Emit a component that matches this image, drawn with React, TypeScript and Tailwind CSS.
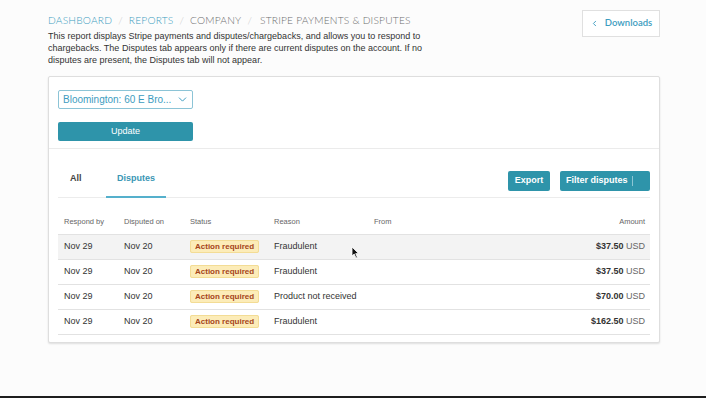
import { ChevronDown, ChevronLeft } from "lucide-react";

const rows = [
  { respond: "Nov 29", disputed: "Nov 20", reason: "Fraudulent", amount: "$37.50" },
  { respond: "Nov 29", disputed: "Nov 20", reason: "Fraudulent", amount: "$37.50" },
  { respond: "Nov 29", disputed: "Nov 20", reason: "Product not received", amount: "$70.00" },
  { respond: "Nov 29", disputed: "Nov 20", reason: "Fraudulent", amount: "$162.50" },
];

function Cursor() {
  return (
    <svg
      className="pointer-events-none absolute left-[351px] top-[246px]"
      width="9"
      height="13"
      viewBox="0 0 9 13"
    >
      <path d="M1 1 L1 10 L3.2 8 L5 12 L6.4 11.4 L4.7 7.6 L7.6 7.6 Z" fill="#111" stroke="#fff" strokeWidth="0.8" />
    </svg>
  );
}

export default function App() {
  return (
    <div className="relative h-[398px] w-[706px] overflow-hidden border-b-2 border-[#1e1e1e] bg-[#fcfcfc] font-['Liberation_Sans',Arial,sans-serif]">
      <div className="flex items-start justify-between pl-[48px] pr-[46px] pt-[10px]">
        <div>
          <div className="flex gap-[6px] pt-[3px] font-['Lato',sans-serif] text-[10.2px] font-light leading-[14px] tracking-[0.2px] text-[#6e6e6e]">
            <span className="text-[#3d9cc0]">DASHBOARD</span>
            <span className="text-[#c4c4c4]">/</span>
            <span className="text-[#3d9cc0]">REPORTS</span>
            <span className="text-[#c4c4c4]">/</span>
            <span>COMPANY</span>
            <span className="text-[#c4c4c4]">/</span>
            <span className="pl-[2px]">STRIPE PAYMENTS &amp; DISPUTES</span>
          </div>
          <p className="mt-[3px] w-[404px] text-[9px] leading-[12px] text-[#333]">
            This report displays Stripe payments and disputes/chargebacks, and allows you to respond to
            chargebacks. The Disputes tab appears only if there are current disputes on the account. If no
            disputes are present, the Disputes tab will not appear.
          </p>
        </div>
        <button className="flex h-[27px] w-[78px] items-center justify-center gap-[6px] border border-[#e0e0e0] bg-white font-['Lato',sans-serif] text-[9.5px] font-semibold text-[#3d9cc0]">
          <ChevronLeft className="h-[9px] w-[9px]" strokeWidth={2.5} />
          Downloads
        </button>
      </div>

      <div className="ml-[48px] mt-[10px] h-[267px] w-[612px] rounded-[2px] border border-[#dedede] bg-white shadow-[0_1px_2px_rgba(0,0,0,0.12)]">
        <div className="px-[9px] pt-[13px]">
          <div className="flex h-[19px] w-[135px] items-center justify-between rounded-[2px] border border-[#8cc4d6] pl-[4px] pr-[3px] text-[10px] text-[#3d9cc0]">
            <span>Bloomington: 60 E Bro...</span>
            <ChevronDown className="h-[13px] w-[13px]" strokeWidth={1.8} />
          </div>
          <button className="mt-[13px] h-[19px] w-[135px] rounded-[2px] bg-[#2e94aa] text-[9px] text-white">
            Update
          </button>
        </div>
        <div className="mt-[7px] border-t border-[#ebebeb] px-[9px]">
          <div className="flex items-end justify-between border-b border-[#ececec]">
            <div className="flex text-[9px] font-bold">
              <div className="w-[48px] pb-[11px] pl-[12px] pt-[23px] text-[#444]">All</div>
              <div className="-mb-px w-[60px] border-b-2 border-[#55b0cc] pb-[9px] pt-[23px] text-center text-[#3a96b4]">
                Disputes
              </div>
            </div>
            <div className="flex gap-[10px] pb-[6px] text-[9px] font-bold text-white">
              <button className="h-[20px] w-[42px] rounded-[2px] bg-[#2e94aa]">Export</button>
              <button className="flex h-[20px] w-[90px] items-center rounded-[2px] bg-[#2e94aa] pl-[6px]">
                Filter disputes
                <span className="ml-[4px] h-[10px] w-px bg-[#8cc6d4]" />
              </button>
            </div>
          </div>

          <table className="mt-[18px] w-full border-collapse text-left">
            <thead>
              <tr className="text-[7.5px] text-[#666]">
                <th className="w-[66px] pb-[7px] pl-[6px] font-normal">Respond by</th>
                <th className="w-[66px] pb-[7px] font-normal">Disputed on</th>
                <th className="w-[84px] pb-[7px] font-normal">Status</th>
                <th className="w-[100px] pb-[7px] font-normal">Reason</th>
                <th className="pb-[7px] font-normal">From</th>
                <th className="pb-[7px] pr-[5px] text-right font-normal">Amount</th>
              </tr>
            </thead>
            <tbody>
              {rows.map((r, i) => (
                <tr
                  key={i}
                  className={`h-[25px] border-y border-[#e2e2e2] text-[9px] text-[#333] ${i === 0 ? "bg-[#f3f3f3]" : ""}`}
                >
                  <td className="pl-[6px]">{r.respond}</td>
                  <td>{r.disputed}</td>
                  <td>
                    <span className="rounded-[2px] border border-[#f3dc95] bg-[#fcecb8] px-[4px] py-[1px] text-[8px] font-bold text-[#a5441a]">
                      Action required
                    </span>
                  </td>
                  <td>{r.reason}</td>
                  <td />
                  <td className="pr-[5px] text-right">
                    <span className="font-bold">{r.amount}</span>{" "}
                    <span className="text-[#666]">USD</span>
                  </td>
                </tr>
              ))}
            </tbody>
          </table>
        </div>
      </div>
      <Cursor />
    </div>
  );
}
